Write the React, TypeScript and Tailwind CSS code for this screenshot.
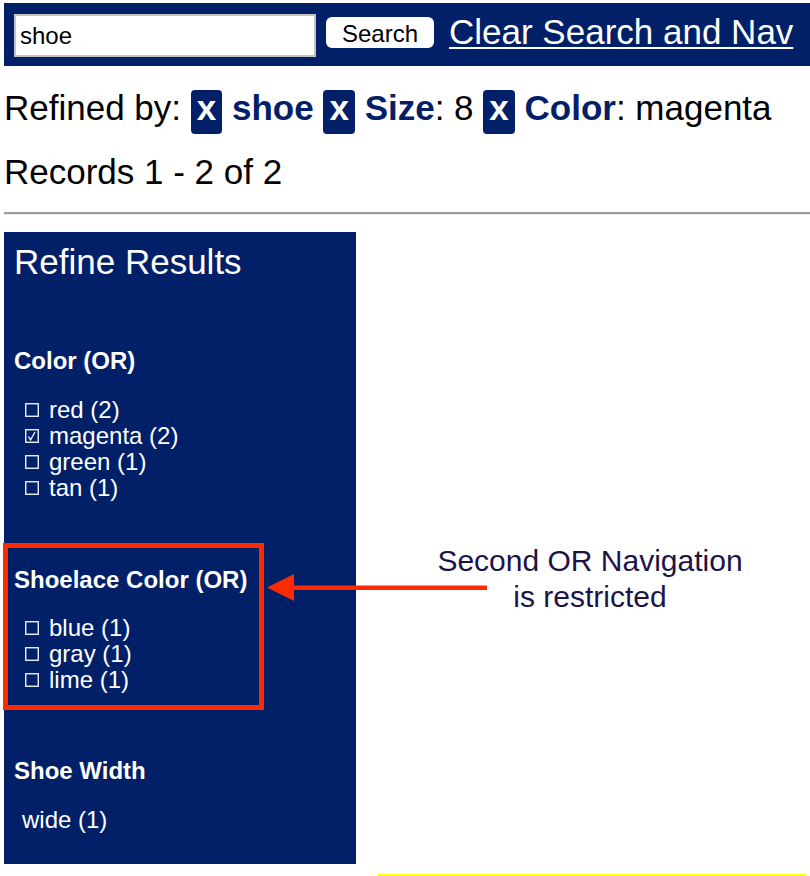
import React from "react";

const NAVY = "bg-[#012068]";

function Box({ checked }: { checked?: boolean }) {
  return (
    <svg width="14" height="14" viewBox="0 0 14 14" className="shrink-0">
      <rect x="0.75" y="0.75" width="12.5" height="12.5" fill="none" stroke="#ffffff" strokeWidth="1.3" />
      {checked && (
        <polyline points="3.5,7.5 5.5,11 10,3" fill="none" stroke="#ffffff" strokeWidth="1.3" />
      )}
    </svg>
  );
}

function Item({ label, checked }: { label: string; checked?: boolean }) {
  return (
    <div className="flex items-center h-[26px] pl-[11px]">
      <Box checked={checked} />
      <span className="ml-[10px] leading-[26px]">{label}</span>
    </div>
  );
}

function Badge() {
  return (
    <span className="inline-block bg-[#012068] text-white font-bold rounded-[4px] px-[6px] leading-[36px] pb-[8px] align-baseline">
      x
    </span>
  );
}

export default function App() {
  return (
    <div
      className="pl-[4px] pt-[3px] bg-white text-black w-[810px] h-[876px] overflow-hidden"
      style={{ fontFamily: '"Liberation Sans", Arial, Helvetica, sans-serif' }}
    >
      {/* Header */}
      <div className={`${NAVY} h-[63px] flex items-start pl-[10px] pt-[9px]`}>
        <div className="mt-[2px] w-[302px] h-[43px] bg-white border-2 border-[#c4c4c4] flex items-center pl-[4px] text-[24px] leading-none">
          shoe
        </div>
        <button className="ml-[10px] mt-[5px] w-[108px] h-[31px] bg-white rounded-[6px] text-[24px] leading-none flex items-center justify-center pt-[2px]">
          Search
        </button>
        <a className="ml-[15px] text-white underline text-[35px] leading-[40px] decoration-[2px] underline-offset-[3px]">
          Clear Search and Nav
        </a>
      </div>

      {/* Refined by */}
      <div className="mt-[16px] text-[35px] leading-[52px] whitespace-nowrap">
        Refined by: <Badge /> <span className="font-bold text-[#012068]">shoe</span> <Badge />{" "}
        <span className="font-bold text-[#012068]">Size</span>: 8 <Badge />{" "}
        <span className="font-bold text-[#012068]">Color</span>: magenta
      </div>

      <div className="mt-[12px] text-[35px] leading-[52px]">Records 1 - 2 of 2</div>

      <div className="mt-[14px] border-t-2 border-[#9c9c9c] border-b border-b-[#ececec]" />

      {/* Body */}
      <div className="mt-[17px] flex relative">
        <div className={`${NAVY} w-[352px] h-[632px] text-white pl-[10px] pt-[10px]`}>
          <div className="text-[35px] leading-[40px]">Refine Results</div>

          <div className="mt-[65px] text-[24px] leading-[28px] font-bold">Color (OR)</div>
          <div className="mt-[22px] text-[24px]">
            <Item label="red (2)" />
            <Item label="magenta (2)" checked />
            <Item label="green (1)" />
            <Item label="tan (1)" />
          </div>

          <div className="mt-[65px] text-[24px] leading-[28px] font-bold">Shoelace Color (OR)</div>
          <div className="mt-[21px] text-[24px]">
            <Item label="blue (1)" />
            <Item label="gray (1)" />
            <Item label="lime (1)" />
          </div>

          <div className="mt-[64px] text-[24px] leading-[28px] font-bold">Shoe Width</div>
          <div className="mt-[22px] text-[24px] leading-[26px] pl-[8px]">wide (1)</div>
        </div>

        <div className="flex-1 pl-[14px] pt-[311px] text-center text-[30px] leading-[36px] text-[#1c1448]">
          <div>Second OR Navigation</div>
          <div>is restricted</div>
        </div>

        {/* Annotation overlay: red box and arrow */}
        <div className="absolute left-[-1px] top-[311px] w-[261px] h-[167px] border-[5px] border-[#ff2a00]" />
        <svg
          className="absolute left-[263px] top-[341px]"
          width="222"
          height="30"
          viewBox="0 0 222 30"
        >
          <polygon points="0,14.5 27,1 27,28" fill="#ff2a00" />
          <rect x="26" y="12.5" width="194" height="4.5" fill="#ff2a00" />
        </svg>
      </div>

      <div className="mt-[10px] ml-[374px] w-[427px] h-[4px] bg-[#ffff00]" />
    </div>
  );
}
